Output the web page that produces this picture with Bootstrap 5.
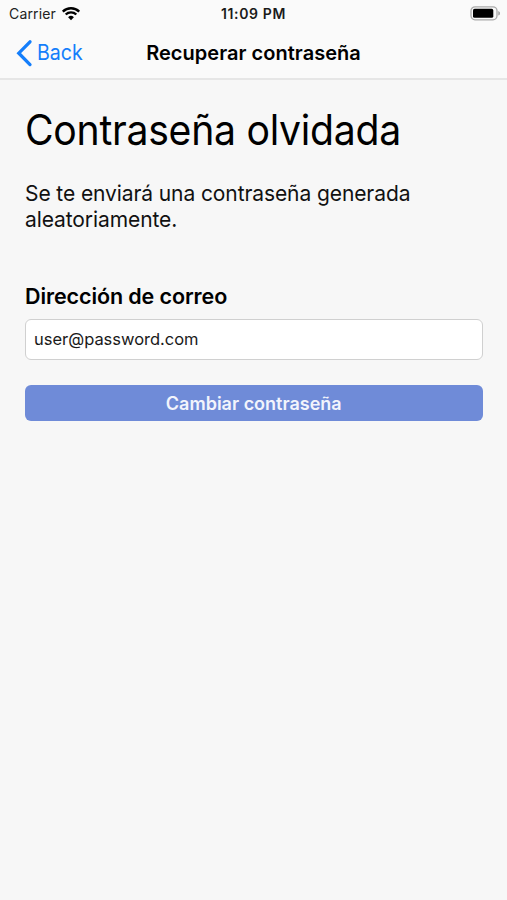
<!DOCTYPE html>
<html lang="es">
<head>
<meta charset="utf-8">
<meta name="viewport" content="width=device-width, initial-scale=1">
<title>Recuperar contraseña</title>
<link href="https://cdn.jsdelivr.net/npm/bootstrap@5.3.0/dist/css/bootstrap.min.css" rel="stylesheet">
<style>
body{font-family:Inter,"Liberation Sans",sans-serif;background:#f7f7f7;color:#000;height:900px;overflow:hidden}
.top-area{background:#fafafa;height:80px;border-bottom:2px solid #e6e6e6}
.status{height:27px;padding:0 7px 0 9px;font-size:14px;line-height:27px}
.carrier{letter-spacing:.15px;color:#222}
.wifi{margin-left:5px;margin-top:-1px}
.side{flex:1 1 0}
.clock{font-weight:600;font-size:14px;letter-spacing:.65px;color:#1a1a1a;margin-left:-2px}
.bar{height:51px;padding:0 16px;font-size:20px}
.back{color:#147efb;font-size:21px}
.back span{transform:scaleX(.935);transform-origin:0 50%}
.title{font-weight:600;font-size:20px;letter-spacing:.04px}
.content{padding:25px 24.5px 0 25px}
h1{font-size:42px;line-height:50px;font-weight:400;margin:0;letter-spacing:-.3px;white-space:nowrap;transform:scaleX(.933);transform-origin:0 50%}
.desc{font-size:22px;line-height:26px;margin:25px 0 0;letter-spacing:-.1px;color:#111;white-space:nowrap;transform:scaleX(.955);transform-origin:0 50%}
.form-label{font-size:21.5px;line-height:26px;font-weight:600;margin:51px 0 10px;letter-spacing:-.1px}
.form-control{height:41px;border:1px solid #d0d0d0;border-radius:6px;padding:0 8px 2px;font-size:16.5px;letter-spacing:-.02px;color:#1a1a1a;background:#fff}
.btn-send,.btn-send:hover{height:36px;margin-top:25px;background:#6f8bd8;color:#f2f4fc;border:0;border-radius:6px;font-size:18px;line-height:37px;font-weight:600;padding:0}
</style>
</head>
<body>
<header class="top-area">
<div class="status d-flex align-items-center">
<div class="side d-flex align-items-center"><span class="carrier">Carrier</span>
<svg class="wifi" width="20" height="15" viewBox="0 0 20 15"><path d="M1.8 5.6a11.7 11.7 0 0 1 16.4 0M4.7 8.5a7.6 7.6 0 0 1 10.6 0" fill="none" stroke="#000" stroke-width="2.4"/><path d="M10 14.2 7.1 11.2a4.2 4.2 0 0 1 5.8 0z"/></svg></div>
<span class="clock">11:09 PM</span>
<div class="side d-flex justify-content-end"><svg width="30" height="15" viewBox="0 0 30 15"><rect x="1" y=".8" width="26" height="13" rx="4" fill="none" stroke="#aaa" stroke-width="1.3"/><rect x="3" y="2.8" width="20.3" height="9" rx="1.6"/><path d="M28.2 5v4.6q2-.8 2-2.3T28.2 5z" fill="#aaa"/></svg></div>
</div>
<nav class="bar d-flex align-items-center">
<div class="side d-flex align-items-center back"><svg width="17" height="28" viewBox="0 0 17 28"><path d="M14 2.8 2.8 14.2 14 25.6" fill="none" stroke="#147efb" stroke-width="3.3" stroke-linecap="round"/></svg><span class="ms-1">Back</span></div>
<span class="title">Recuperar contraseña</span><div class="side"></div>
</nav>
</header>
<main class="content">
<h1>Contraseña olvidada</h1>
<p class="desc">Se te enviará una contraseña generada<br>aleatoriamente.</p>
<label class="form-label d-block" for="mail">Dirección de correo</label>
<input id="mail" class="form-control" value="user@password.com">
<button class="btn btn-send w-100">Cambiar contraseña</button>
</main>
<script src="https://cdn.jsdelivr.net/npm/bootstrap@5.3.0/dist/js/bootstrap.bundle.min.js"></script>
</body>
</html>
